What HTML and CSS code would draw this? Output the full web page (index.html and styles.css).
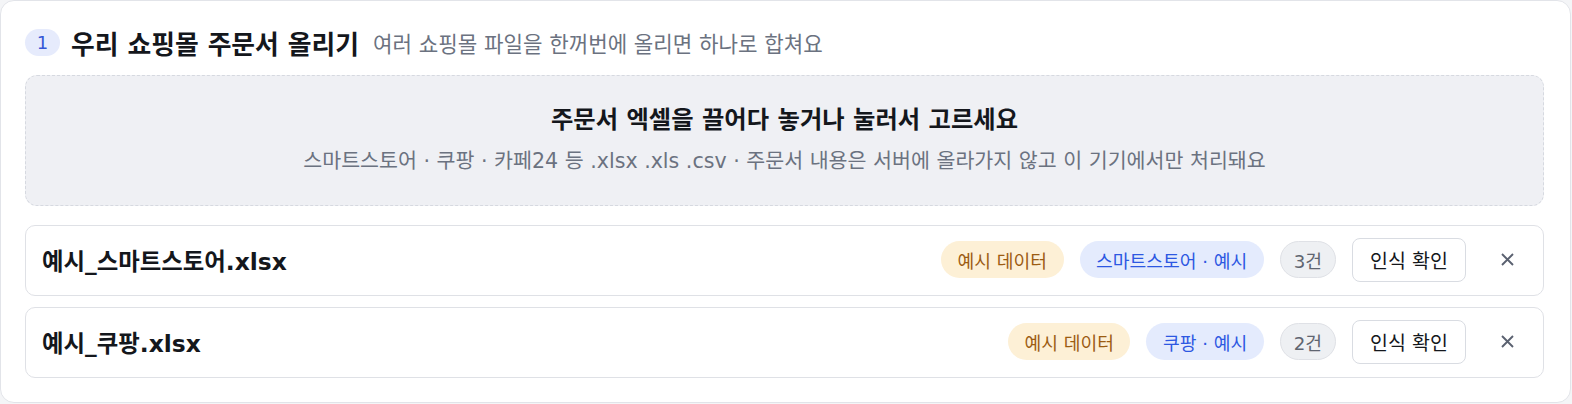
FILE: index.html
```html
<!DOCTYPE html>
<html lang="ko">
<head>
  <meta charset="utf-8">
  <title>주문서 올리기</title>
  <link rel="stylesheet" href="styles.css">
</head>
<body>
  <div class="card">
    <div class="step-head">
      <span class="step-num">1</span>
      <h2>우리 쇼핑몰 주문서 올리기</h2>
      <span class="step-desc">여러 쇼핑몰 파일을 한꺼번에 올리면 하나로 합쳐요</span>
    </div>

    <!-- 파일 끌어놓기 영역 -->
    <div class="dropzone">
      <div class="drop-title">주문서 엑셀을 끌어다 놓거나 눌러서 고르세요</div>
      <div class="drop-sub">스마트스토어 · 쿠팡 · 카페24 등 .xlsx .xls .csv · 주문서 내용은 서버에 올라가지 않고 이 기기에서만 처리돼요</div>
    </div>

    <div class="file-list">
      <div class="file-row">
        <span class="file-name">예시_스마트스토어.xlsx</span>
        <span class="pill pill-sample">예시 데이터</span>
        <span class="pill pill-mall">스마트스토어 · 예시</span>
        <span class="pill pill-count">3건</span>
        <button class="btn-check">인식 확인</button>
        <button class="btn-remove" aria-label="삭제">
          <svg width="13" height="13" viewBox="0 0 13 13"><path d="M1 1L12 12M12 1L1 12" /></svg>
        </button>
      </div>
      <div class="file-row">
        <span class="file-name">예시_쿠팡.xlsx</span>
        <span class="pill pill-sample">예시 데이터</span>
        <span class="pill pill-mall">쿠팡 · 예시</span>
        <span class="pill pill-count">2건</span>
        <button class="btn-check">인식 확인</button>
        <button class="btn-remove" aria-label="삭제">
          <svg width="13" height="13" viewBox="0 0 13 13"><path d="M1 1L12 12M12 1L1 12" /></svg>
        </button>
      </div>
    </div>
  </div>
</body>
</html>
```

FILE: styles.css
```css
body {
  margin: 0;
  font-family: 'DejaVu Sans', 'Noto Sans CJK KR', sans-serif;
  color: #14171c;
  background: #f4f5f7;
}
.card {
  box-sizing: border-box;
  width: 1571px;
  height: 403px;
  background: #ffffff;
  border: 1px solid #e2e4e9;
  border-radius: 14px;
  padding: 27px 26px 0 24px;
}
.step-head {
  display: flex;
  align-items: center;
  height: 28px;
}
.step-num {
  width: 35px;
  height: 27px;
  border-radius: 14px;
  background: #e6ebfc;
  color: #3556d6;
  font-size: 18px;
  display: flex;
  align-items: center;
  justify-content: center;
  margin-right: 11px;
}
h2 {
  margin: 0 14px 0 0;
  font-size: 25.8px;
  font-weight: bold;
  white-space: nowrap;
}
.step-desc {
  font-size: 21.2px;
  color: #6b7280;
  white-space: nowrap;
}
/* 끌어놓기 박스 */
.dropzone {
  margin-top: 19px;
  height: 131px;
  box-sizing: border-box;
  border: 1px dashed #d6d9e0;
  border-radius: 12px;
  background: #eff0f4;
  text-align: center;
  padding-top: 29px;
}
.drop-title {
  font-size: 24.3px;
  font-weight: bold;
  line-height: 30px;
}
.drop-sub {
  margin-top: 13px;
  font-size: 20.6px;
  line-height: 26px;
  color: #6b7280;
  white-space: nowrap;
}
.file-list {
  margin-top: 19px;
  display: flex;
  flex-direction: column;
  gap: 11px;
}
.file-row {
  height: 71px;
  box-sizing: border-box;
  border: 1px solid #dfe1e6;
  border-radius: 10px;
  display: flex;
  align-items: center;
  padding: 0 14px 2px 16px;
  gap: 16px;
}
.file-name {
  flex: 1;
  font-size: 23.4px;
  font-weight: bold;
  white-space: nowrap;
}
.pill {
  height: 37px;
  box-sizing: border-box;
  border-radius: 19px;
  padding: 0 16.5px;
  display: flex;
  align-items: center;
  font-size: 18.2px;
  white-space: nowrap;
}
.pill-sample {
  background: #fdf0d6;
  color: #9c5c12;
}
.pill-mall {
  background: #e4ebfd;
  color: #2d58e2;
}
.pill-count {
  background: #eef0f3;
  border: 1px solid #dfe1e6;
  color: #5f6570;
  padding: 0 13px;
}
.btn-check {
  height: 44px;
  padding: 0 17px;
  background: #ffffff;
  border: 1px solid #d9dce2;
  border-radius: 8px;
  font-family: inherit;
  font-size: 19.5px;
  color: #14171c;
  white-space: nowrap;
}
.btn-remove {
  width: 44px;
  height: 44px;
  margin-left: 3px;
  padding: 0;
  border: none;
  background: none;
  display: flex;
  align-items: center;
  justify-content: center;
}
.btn-remove path {
  stroke: #5a6170;
  stroke-width: 1.9;
  fill: none;
}
```
